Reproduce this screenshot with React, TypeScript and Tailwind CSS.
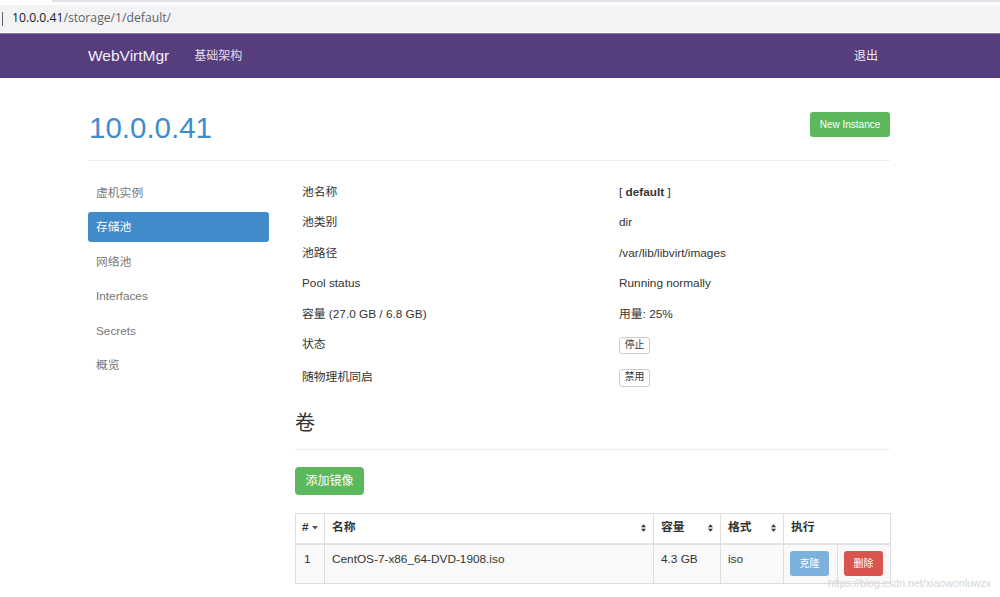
import React from "react";

const SortIcon = () => (
  <svg width="5" height="8" viewBox="0 0 5 8" className="shrink-0">
    <polygon points="0,3.3 2.5,0.3 5,3.3" fill="#333" />
    <polygon points="0,4.7 2.5,7.7 5,4.7" fill="#333" />
  </svg>
);

const infoRows: { label: string; value: React.ReactNode; h: string }[] = [
  { label: "池名称", value: <span>[ <b>default</b> ]</span>, h: "h-[30.5px]" },
  { label: "池类别", value: "dir", h: "h-[30.5px]" },
  { label: "池路径", value: "/var/lib/libvirt/images", h: "h-[30.5px]" },
  { label: "Pool status", value: "Running normally", h: "h-[30.5px]" },
  { label: "容量 (27.0 GB / 6.8 GB)", value: "用量: 25%", h: "h-[30.5px]" },
  {
    label: "状态",
    value: (
      <span className="inline-flex h-[17px] w-[31px] items-center justify-center rounded-[3px] border border-[#ccc] bg-white text-[9.8px] text-[#333]">
        停止
      </span>
    ),
    h: "h-[30.5px]",
  },
  {
    label: "随物理机同启",
    value: (
      <span className="inline-flex h-[18px] w-[31px] items-center justify-center rounded-[3px] border border-[#ccc] bg-white text-[9.8px] text-[#333]">
        禁用
      </span>
    ),
    h: "h-[34px]",
  },
];

const sideItems = ["虚机实例", "存储池", "网络池", "Interfaces", "Secrets", "概览"];

export default function App() {
  return (
    <div className="relative h-[597px] w-[1000px] overflow-hidden bg-white font-['Liberation_Sans','Noto_Sans_CJK_SC',sans-serif] text-[11.8px] text-[#333]">
      {/* browser chrome */}
      <div className="flex h-[2px]">
        <div className="w-[52px] bg-white" />
        <div className="flex-1 bg-[#dee1e6]" />
      </div>
      <div className="h-[3px] bg-white" />
      <div className="flex h-[27px] items-center bg-[#f1f3f4] font-['Open_Sans','Noto_Sans',sans-serif] text-[12.2px]">
        <span className="ml-[2px] h-[14px] w-[1px] bg-[#5f6368]" />
        <span className="ml-[9px] text-[#202124]">10.0.0.41</span>
        <span className="text-[#5f6368]">/storage/1/default/</span>
      </div>
      <div className="h-[1px] bg-white" />
      {/* navbar */}
      <div className="h-[45px] border-t border-[#8a77a6] bg-[#563d7c]">
        <div className="ml-[88px] flex h-full w-[802px] items-center">
          <span className="text-[15.5px] text-[#f3eff8]">WebVirtMgr</span>
          <span className="ml-[25px] text-[12px] text-[#e3dcec]">基础架构</span>
          <span className="ml-auto mr-[12px] text-[12px] text-[#f0ebf6]">退出</span>
        </div>
      </div>

      {/* content */}
      <div className="ml-[88px] w-[802px]">
        <div className="flex items-start justify-between border-b border-[#eee] pb-[16px] pt-[33px]">
          <h1 className="ml-[1px] text-[29.5px] leading-[33px] text-[#428bca]">10.0.0.41</h1>
          <button className="mt-[1px] h-[25px] w-[80px] rounded-[3px] bg-[#5cb85c] text-[10px] text-white">
            New Instance
          </button>
        </div>

        <div className="flex gap-[26px] pt-[16.5px]">
          {/* sidebar */}
          <div className="flex w-[181px] flex-col gap-[4.5px]">
            {sideItems.map((s) => (
              <div
                key={s}
                className={
                  s === "存储池"
                    ? "h-[30px] rounded-[3px] bg-[#428bca] px-[8px] leading-[30px] text-white"
                    : "h-[30px] px-[8px] leading-[30px] text-[#777]"
                }
              >
                {s}
              </div>
            ))}
          </div>

          {/* main */}
          <div className="w-[595px]">
            <div className="flex flex-col">
              {infoRows.map((r) => (
                <div key={r.label} className={`grid grid-cols-[317px_1fr] items-center ${r.h}`}>
                  <div className="pl-[7px]">{r.label}</div>
                  <div className="pl-[7px]">{r.value}</div>
                </div>
              ))}
            </div>

            <div className="mt-[16px] border-b border-[#eee] pb-[14px]">
              <h3 className="text-[20px] leading-[24px] text-[#333]">卷</h3>
            </div>

            <button className="mt-[17px] h-[28px] w-[69px] rounded-[4px] bg-[#5cb85c] text-[12px] text-white">
              添加镜像
            </button>

            <table className="mt-[18px] w-[595px] table-fixed border-collapse">
              <colgroup>
                <col className="w-[29px]" />
                <col className="w-[329px]" />
                <col className="w-[67px]" />
                <col className="w-[63px]" />
                <col className="w-[54px]" />
                <col className="w-[53px]" />
              </colgroup>
              <thead>
                <tr className="h-[31px] bg-white">
                  <th className="border border-b-2 border-[#ddd] border-b-[#e2e2e2] pl-[6px] text-left font-bold">
                    <span className="inline-flex items-center gap-[3px]">
                      #
                      <svg width="6" height="4" viewBox="0 0 6 4">
                        <polygon points="0,0 6,0 3,3.5" fill="#555" />
                      </svg>
                    </span>
                  </th>
                  <th className="border border-b-2 border-[#ddd] border-b-[#e2e2e2] pl-[7px] pr-[7px] text-left font-bold">
                    <div className="flex items-center justify-between">
                      名称 <SortIcon />
                    </div>
                  </th>
                  <th className="border border-b-2 border-[#ddd] border-b-[#e2e2e2] pl-[7px] pr-[7px] text-left font-bold">
                    <div className="flex items-center justify-between">
                      容量 <SortIcon />
                    </div>
                  </th>
                  <th className="border border-b-2 border-[#ddd] border-b-[#e2e2e2] pl-[7px] pr-[7px] text-left font-bold">
                    <div className="flex items-center justify-between">
                      格式 <SortIcon />
                    </div>
                  </th>
                  <th
                    colSpan={2}
                    className="border border-b-2 border-[#ddd] border-b-[#e2e2e2] pl-[7px] text-left font-bold"
                  >
                    执行
                  </th>
                </tr>
              </thead>
              <tbody>
                <tr className="h-[39px] bg-[#f9f9f9]">
                  <td className="border border-[#ddd] pl-[8px] pt-[7px] align-top leading-[15px]">1</td>
                  <td className="border border-[#ddd] pl-[7px] pt-[7px] align-top leading-[15px]">
                    CentOS-7-x86_64-DVD-1908.iso
                  </td>
                  <td className="border border-[#ddd] pl-[7px] pt-[7px] align-top leading-[15px]">4.3 GB</td>
                  <td className="border border-[#ddd] pl-[7px] pt-[7px] align-top leading-[15px]">iso</td>
                  <td className="border border-[#ddd] pl-[6px] pt-[6px] pb-[6px] align-top">
                    <button className="h-[25px] w-[39px] rounded-[3px] bg-[#7db1dd] text-[10px] text-white">
                      克隆
                    </button>
                  </td>
                  <td className="border border-[#ddd] pl-[6px] pt-[6px] pb-[6px] align-top">
                    <button className="h-[25px] w-[39px] rounded-[3px] bg-[#d9534f] text-[10px] text-white">
                      删除
                    </button>
                  </td>
                </tr>
              </tbody>
            </table>
          </div>
        </div>
      </div>

      {/* watermark */}
      <div className="absolute left-[828px] top-[576px] whitespace-nowrap text-[10.6px] text-[#d6d6d6]">
        https://blog.csdn.net/xiaowonluwzx
      </div>
    </div>
  );
}
